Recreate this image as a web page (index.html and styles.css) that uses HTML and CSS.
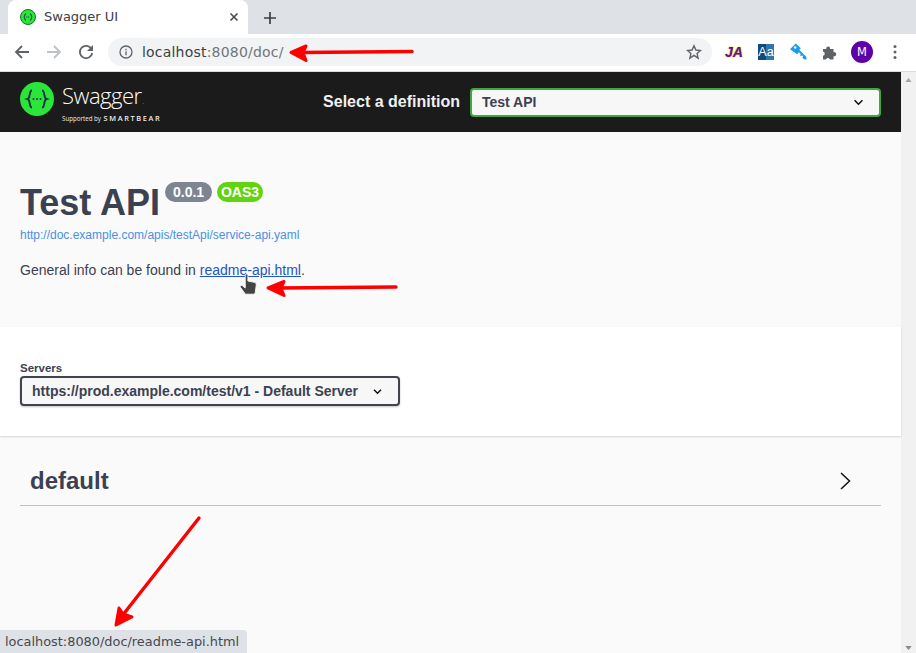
FILE: index.html
```html
<!DOCTYPE html>
<html lang="en">
<head>
<meta charset="utf-8">
<title>Swagger UI</title>
<link rel="stylesheet" href="styles.css">
</head>
<body>
<div class="browser">
  <div class="tabstrip">
    <div class="tab">
      <svg class="favicon" viewBox="0 0 16 16"><circle cx="8" cy="8" r="7.5" fill="#2be53a" stroke="#0c7a1a" stroke-width="1"/><path d="M6 4.5C4.6 4.5 5.2 7.4 3.8 8 5.2 8.6 4.6 11.5 6 11.5M10 4.5C11.4 4.5 10.8 7.4 12.2 8 10.8 8.6 11.4 11.5 10 11.5" fill="none" stroke="#173646" stroke-width="1"/><path d="M6.4 8h3.2" stroke="#173646" stroke-width="1" stroke-dasharray="1 .6"/></svg>
      <span class="tab-title">Swagger UI</span>
      <svg class="tab-close" viewBox="0 0 10 10"><path d="M1.5 1.5l7 7M8.5 1.5l-7 7" stroke="#45494e" stroke-width="1.6"/></svg>
    </div>
    <svg class="new-tab" viewBox="0 0 12 12"><path d="M6 0v12M0 6h12" stroke="#3c4043" stroke-width="1.7"/></svg>
  </div>
  <div class="toolbar">
    <svg class="nav" viewBox="0 0 16 16"><path d="M15 8H2M8 2L2 8l6 6" fill="none" stroke="#5f6368" stroke-width="1.8"/></svg>
    <svg class="nav" viewBox="0 0 16 16"><path d="M1 8h13M8 2l6 6-6 6" fill="none" stroke="#bdc1c6" stroke-width="1.8"/></svg>
    <svg class="nav" viewBox="0 0 16 16"><path d="M13.6 5.2A6.2 6.2 0 1 0 14.2 9" fill="none" stroke="#5f6368" stroke-width="1.8"/><path d="M15 1v6H9z" fill="#5f6368"/></svg>
    <div class="omnibox">
      <svg class="site-icon" viewBox="0 0 14 14"><circle cx="7" cy="7" r="6" fill="none" stroke="#5f6368" stroke-width="1.3"/><path d="M7 6.2v4M7 3.8v1.4" stroke="#5f6368" stroke-width="1.3"/></svg>
      <span class="url"><span class="host">localhost</span>:8080/doc/</span>
      <svg class="star" viewBox="0 0 16 16"><path d="M8 1.8l1.9 4.2 4.6.5-3.4 3.1 1 4.5L8 11.3l-4.1 2.8 1-4.5-3.4-3.1 4.6-.5z" fill="none" stroke="#5f6368" stroke-width="1.4"/></svg>
    </div>
    <div class="extensions">
      <span class="ext-ja">JA</span>
      <span class="ext-aa">Aa</span>
      <svg class="ext-key" viewBox="0 0 18 18"><path d="M0 6.500L6 .5l5.500 5L9.800 7.200l7.400 7.400.3 2.900-2.800-.4-1.700-1.700 1-1-1.300-1.300-1 1-1.200-1.200 1-1-2-2-1.900 1.900z" fill="#1a9bf0"/><circle cx="5.500" cy="4.800" r="1.300" fill="#fff"/></svg>
      <svg class="ext-puzzle" viewBox="0 0 16 16"><path d="M1 5h3.200a2 2 0 0 1 3.800-1.200V5h3.500v3.200a2.100 2.100 0 1 1 0 4V15.500H8a2.200 2.200 0 0 0-4.200 0H1v-3.700a2.200 2.200 0 0 0 0-4.300z" fill="#5f6368"/></svg>
      <span class="avatar">M</span>
      <svg class="kebab" viewBox="0 0 4 16"><circle cx="2" cy="2.500" r="1.500" fill="#5f6368"/><circle cx="2" cy="8" r="1.500" fill="#5f6368"/><circle cx="2" cy="13.500" r="1.500" fill="#5f6368"/></svg>
    </div>
  </div>
  <div class="viewport">
    <main class="page">
      <header class="topbar">
        <div class="brand">
          <svg class="brand-mark" viewBox="0 0 34 34"><circle cx="17" cy="17" r="17" fill="#2be53a"/><path d="M12 8.500C8.500 8.500 11 16 7.500 17 11 18 8.500 25.500 12 25.500M22 8.500C25.500 8.500 23 16 26.500 17 23 18 25.500 25.500 22 25.500" fill="none" stroke="#173646" stroke-width="1.900"/><circle cx="13.500" cy="17" r="1" fill="#173646"/><circle cx="17" cy="17" r="1" fill="#173646"/><circle cx="20.500" cy="17" r="1" fill="#173646"/></svg>
          <div class="brand-text">
            <span class="brand-name">Swagger<span class="brand-dot">.</span></span>
            <span class="brand-sub">Supported by <b>SMARTBEAR</b></span>
          </div>
        </div>
        <div class="definition">
          <span class="definition-label">Select a definition</span>
          <div class="definition-select"><span>Test API</span>
            <svg class="chev" viewBox="0 0 12 8"><path d="M1.500 1.500L6 6l4.500-4.500" fill="none" stroke="#111" stroke-width="1.800"/></svg>
          </div>
        </div>
      </header>
      <section class="info">
        <div class="title-row">
          <h1 class="title">Test API</h1>
          <span class="badge badge-version">0.0.1</span>
          <span class="badge badge-oas">OAS3</span>
        </div>
        <a class="spec-link" href="#">http://doc.example.com/apis/testApi/service-api.yaml</a>
        <p class="desc">General info can be found in <a class="readme" href="#">readme-api.html</a>.</p>
      </section>
      <section class="servers">
        <span class="servers-label">Servers</span>
        <div class="servers-select"><span>https://prod.example.com/test/v1 - Default Server</span>
          <svg class="chev-small" viewBox="0 0 12 8"><path d="M2 2l4 4 4-4" fill="none" stroke="#111" stroke-width="1.700"/></svg>
        </div>
      </section>
      <section class="ops">
        <div class="ops-head">
          <h2 class="ops-title">default</h2>
          <svg class="ops-arrow" viewBox="0 0 12 20"><path d="M2 2l8.500 8L2 18" fill="none" stroke="#111" stroke-width="1.500"/></svg>
        </div>
      </section>
    </main>
    <div class="scrollbar">
      <svg class="scroll-arrow" viewBox="0 0 8 5"><path d="M4 0l4 5H0z" fill="#a6a6a6"/></svg>
      <svg class="scroll-arrow" viewBox="0 0 8 5"><path d="M0 0h8L4 5z" fill="#8a8a8a"/></svg>
    </div>
  </div>
</div>
<svg class="annotations" viewBox="0 0 916 653">
  <defs><filter id="soft" x="-10%" y="-10%" width="120%" height="120%"><feGaussianBlur stdDeviation=".7"/></filter></defs>
  <g fill="#f00" stroke="#f00" stroke-linejoin="round" stroke-linecap="round" filter="url(#soft)">
    <path d="M300 52.500L412 51.500" stroke-width="3.400" fill="none"/>
    <path d="M291 52.500L306 46 303 52.500 306 60.500z" stroke-width="3"/>
    <path d="M278 288L396 287" stroke-width="3.400" fill="none"/>
    <path d="M268 288L284 281.500 281 288 284 295.500z" stroke-width="3"/>
    <path d="M199 518L122 616" stroke-width="3.400" fill="none"/>
    <path d="M116 625L119 608 123 614 132 617z" stroke-width="3"/>
  </g>
  <path transform="translate(-12 -14) scale(1.050)" d="M245 275.500c0-1.500 2.500-1.500 2.500 0v5.500l6 1.200c1.500.4 2.200 1.300 2 2.600l-1 7.200c-.2 1-.8 1.500-1.800 1.500h-6.500c-.8 0-1.300-.3-1.800-1l-4-5.500c-.8-1.300 1-2.500 2-1.500l2.600 2.200z" fill="#444" stroke="#fff" stroke-width=".8"/>
</svg>
<div class="status">localhost:8080/doc/readme-api.html</div>
</body>
</html>
```
FILE: styles.css
```css
* { box-sizing: border-box; }
html, body { margin: 0; height: 100%; overflow: hidden; }
body { position: relative; font-family: "Liberation Sans", Arial, sans-serif; background: #fafafa; }
.browser { display: flex; flex-direction: column; height: 653px; }

.tabstrip { height: 34px; background: #dee1e6; display: flex; align-items: flex-end; padding-left: 8px; }
.tab { width: 240px; height: 34px; background: #fff; border-radius: 8px 8px 0 0; display: flex; align-items: center; padding: 0 9px 1px 12px; }
.favicon { width: 16px; height: 16px; flex: none; }
.tab-title { font: 13px "DejaVu Sans", sans-serif; color: #3c4043; margin-left: 8px; flex: 1; }
.tab-close { width: 10px; height: 10px; }
.new-tab { width: 12px; height: 12px; margin: 0 0 10px 16px; }

.toolbar { height: 38px; background: #fff; border-bottom: 1px solid #dadce0; display: flex; align-items: center; padding: 0 0 2px 14px; }
.nav { width: 16px; height: 16px; margin-right: 16px; }
.nav:nth-child(3) { margin-right: 14px; }
.omnibox { width: 604px; height: 28px; border-radius: 14px; background: #f1f3f4; display: flex; align-items: center; padding: 0 10px 0 11px; }
.site-icon { width: 14px; height: 14px; flex: none; }
.url { font: 14px "DejaVu Sans", sans-serif; color: #70757a; margin-left: 9px; flex: 1; letter-spacing: .2px; }
.host { color: #3c4043; }
.star { width: 16px; height: 16px; }
.extensions { display: flex; align-items: center; margin-left: 13px; }
.ext-ja { width: 19px; font: italic 700 14px "Liberation Sans", sans-serif; color: #5a12b0; text-shadow: 0 0 1.500px #f2c200, 0 0 1px #f2c200, 0 0 1px #f2c200; margin-right: 14px; }
.ext-aa { width: 16px; height: 16px; background: linear-gradient(90deg, #0d4a7d 50%, #2d77ad 50%); color: #fff; font: 12.500px/16px "Liberation Sans", sans-serif; text-align: center; margin-right: 16px; }
.ext-key { width: 17px; height: 17px; margin-right: 15px; }
.ext-puzzle { width: 16px; height: 16px; margin-right: 16px; }
.avatar { width: 22px; height: 22px; border-radius: 50%; background: #5e00a8; color: #fff; font: 11.500px/22px "DejaVu Sans", sans-serif; text-align: center; margin: 0 20px 0 -3px; }
.kebab { width: 4px; height: 16px; }

.viewport { flex: 1; display: flex; min-height: 0; }
.page { flex: 1; min-width: 0; background: #fafafa; display: flex; flex-direction: column; }
.scrollbar { width: 15px; background: #f1f1f1; display: flex; flex-direction: column; justify-content: space-between; align-items: center; padding: 6px 0 3px; }
.scroll-arrow { width: 7px; height: 4px; }

.topbar { height: 60px; background: #1b1b1b; display: flex; align-items: center; justify-content: space-between; padding: 0 20px; }
.brand { display: flex; align-items: flex-start; height: 40px; margin-top: -1px; }
.brand-mark { width: 34px; height: 34px; }
.brand-text { display: flex; flex-direction: column; margin-left: 8px; color: #fff; }
.brand-name { font: 300 22px/26px "Open Sans", sans-serif; letter-spacing: -.5px; color: #fff; }
.brand-dot { font-size: 6px; margin-left: 1px; }
.brand-sub { font: 500 6.200px/9px "Open Sans", sans-serif; margin-top: -1px; white-space: nowrap; color: #eee; }
.brand-sub b { font: 600 7.400px/9px "Open Sans", sans-serif; letter-spacing: 1.600px; margin-left: 1px; }
.definition { display: flex; align-items: center; }
.definition-label { font-weight: 700; font-size: 16px; color: #f0f0f0; margin-right: 10px; }
.definition-select { width: 411px; height: 29px; border: 2px solid #41a541; border-radius: 4px; background: #f7f7f7; display: flex; align-items: center; justify-content: space-between; padding: 0 15px 0 10px; font-weight: 700; font-size: 14px; color: #3b4151; }
.chev { width: 11px; height: 7px; }

.info { height: 195px; flex: none; padding: 49px 20px 0; }
.title-row { display: flex; align-items: flex-start; }
.title { margin: 0; font-size: 36px; line-height: 43px; font-weight: 700; color: #3b4151; }
.badge { font-weight: 700; font-size: 14px; line-height: 20px; height: 20px; border-radius: 10px; color: #fff; text-align: center; }
.badge-version { background: #7d8492; width: 47px; margin: 1px 0 0 5px; }
.badge-oas { background: #62d30f; width: 46px; margin: 1px 0 0 5px; }
.spec-link { display: block; margin-top: 4px; font-size: 12px; line-height: 14px; color: #4990e2; text-decoration: none; }
.desc { margin: 19px 0 0; font-size: 14px; line-height: 18px; color: #3b4151; }
.readme { color: #1f55c5; }

.servers { height: 109px; background: #fff; box-shadow: 0 1px 2px rgba(0,0,0,.15); padding: 35px 20px 0; display: flex; flex-direction: column; align-items: flex-start; position: relative; }
.servers-label { font-weight: 700; font-size: 11.500px; line-height: 13px; color: #3b4151; }
.servers-select { width: 380px; height: 30px; margin-top: 1px; border: 2px solid #41444e; border-radius: 4px; background: #f7f7f7; box-shadow: 0 1px 2px rgba(0,0,0,.25); display: flex; align-items: center; justify-content: space-between; padding: 0 15px 0 10px; font-weight: 700; font-size: 14px; color: #3b4151; }
.chev-small { width: 11px; height: 7px; }

.ops { padding: 25px 20px 0; flex: 1; }
.ops-head { height: 45px; border-bottom: 1px solid #bfc1c4; display: flex; align-items: center; justify-content: space-between; padding: 0 30px 4px 10px; }
.ops-title { margin: 0; font-size: 24px; font-weight: 700; color: #3b4151; }
.ops-arrow { width: 12px; height: 20px; }

.annotations { position: absolute; left: 0; top: 0; width: 916px; height: 653px; pointer-events: none; }
.status { position: absolute; left: 0; bottom: 0; width: 247px; height: 23px; background: #dee1e6; border-top-right-radius: 4px; font: 12.900px/23px "DejaVu Sans", sans-serif; color: #46494e; padding-left: 5px; white-space: nowrap; }
```
